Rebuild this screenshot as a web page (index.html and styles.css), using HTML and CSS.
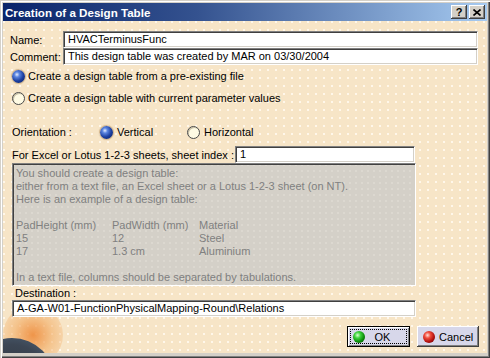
FILE: index.html
```html
<!DOCTYPE html>
<html lang="en">
<head>
  <meta charset="UTF-8" />
  <title>Creation of a Design Table</title>
  <link rel="stylesheet" href="styles.css">
</head>
<body>

  <div class="window">
    <div class="titlebar">
      <span class="title">Creation of a Design Table</span>
      <div class="tb-buttons">
        <button class="tb-btn">?</button>
        <button class="tb-btn">
          <svg width="8" height="7" viewBox="0 0 8 7"><path d="M0.5 0.5 L7.5 6.5 M7.5 0.5 L0.5 6.5" stroke="#000" stroke-width="1.6"/></svg>
        </button>
      </div>
    </div>

    <div class="client">
      <!-- background decoration: sunrise over a planet -->
      <div class="glow"></div>
      <div class="globe"></div>

      <div class="field-row">
        <label>Name:</label>
        <div class="input wide">HVACTerminusFunc</div>
      </div>
      <div class="field-row">
        <label>Comment:</label>
        <div class="input wide">This design table was created by MAR on 03/30/2004</div>
      </div>

      <div class="radio-row"><span class="radio on"></span>Create a design table from a pre-existing file</div>
      <div class="radio-row"><span class="radio off"></span>Create a design table with current parameter values</div>

      <div class="orient-row">
        <span class="orient-label">Orientation :</span>
        <span class="opt first"><span class="radio on"></span>Vertical</span>
        <span class="opt"><span class="radio off"></span>Horizontal</span>
      </div>

      <div class="sheet-row">
        <span class="sheet-label">For Excel or Lotus 1-2-3 sheets, sheet index :</span>
        <div class="input sheet">1</div>
      </div>

      <div class="info-box">
        <div>You should create a design table:</div>
        <div>either from a text file, an Excel sheet or a Lotus 1-2-3 sheet (on NT).</div>
        <div>Here is an example of a design table:</div>
        <div class="blank"></div>
        <div class="cols"><span>PadHeight (mm)</span><span>PadWidth (mm)</span><span>Material</span></div>
        <div class="cols"><span>15</span><span>12</span><span>Steel</span></div>
        <div class="cols"><span>17</span><span>1.3 cm</span><span>Aluminium</span></div>
        <div class="blank"></div>
        <div>In a text file, columns should be separated by tabulations.</div>
      </div>

      <div class="dest-label">Destination :</div>
      <div class="input dest">A-GA-W01-FunctionPhysicalMapping-Round\Relations</div>

      <div class="buttons">
        <button class="btn ok"><span class="focus"><span class="led green"></span><span class="lbl">OK</span></span></button>
        <button class="btn cancel"><span class="led red"></span><span>Cancel</span></button>
      </div>
    </div>
  </div>

</body>
</html>
```

FILE: styles.css
```css
html, body {
  margin: 0;
}
body {
  font-family: "Liberation Sans", Arial, sans-serif;
  font-size: 11px;
  color: #000;
  width: 490px;
  height: 358px;
  overflow: hidden;
}
.window {
  box-sizing: border-box;
  width: 490px;
  height: 358px;
  padding: 3px 3px 5px 3px;
  background: #d4d0c8;
  box-shadow: inset 1px 1px #d4d0c8, inset 2px 2px #fff, inset -1px -1px #404040, inset -2px -2px #808080;
  display: flex;
  flex-direction: column;
}
.titlebar {
  height: 18px;
  flex: none;
  display: flex;
  align-items: center;
  padding-left: 2px;
  background: linear-gradient(to right, #0a246a, #34528f 40%, #a6caf0);
}
.title {
  color: #fff;
  font-weight: bold;
  font-size: 11.6px;
}
.tb-buttons {
  margin-left: auto;
  display: flex;
  gap: 2px;
  padding-right: 2px;
}
.tb-btn {
  width: 16px;
  height: 14px;
  box-sizing: border-box;
  padding: 0;
  border: none;
  background: #d4d0c8;
  box-shadow: inset -1px -1px #404040, inset 1px 1px #fff, inset -2px -2px #808080;
  font-family: "Liberation Sans", Arial, sans-serif;
  font-weight: bold;
  font-size: 11px;
  color: #000;
  display: flex;
  align-items: center;
  justify-content: center;
}
.client {
  flex: 1;
  position: relative;
  z-index: 0;
  overflow: hidden;
  padding: 10px 8px 0 9px;
  background-color: #f7e5c7;
  background-image: radial-gradient(circle at 1px 1px, #fff7ea 0.8px, transparent 1.3px);
  background-size: 8px 8px;
}
.glow {
  position: absolute;
  z-index: -1;
  left: 0;
  top: 284px;
  width: 60px;
  height: 60px;
  border-radius: 50%;
  background: radial-gradient(circle, rgba(238, 140, 60, 0.9) 0, rgba(242, 168, 92, 0.55) 45%, rgba(247, 229, 199, 0) 100%);
}
.globe {
  position: absolute;
  z-index: -1;
  left: -34px;
  top: 317px;
  width: 86px;
  height: 86px;
  border-radius: 50%;
  background: radial-gradient(circle at 50% 50%, #2e343c 0, #3c4654 60%, #4a5c70 84%, #5a8cb4 91%, #8ad0f2 100%);
}
.field-row {
  display: flex;
  align-items: center;
  height: 17px;
}
.field-row label {
  width: 53px;
  margin-left: -2px;
}
.input {
  box-sizing: border-box;
  height: 17px;
  background: #fff;
  border: 1px solid;
  border-color: #808080 #fff #fff #808080;
  box-shadow: inset 1px 1px #404040, inset -1px -1px #d4d0c8;
  padding: 0 3px 0 4px;
  line-height: 15px;
  white-space: nowrap;
  overflow: hidden;
}
.input.wide {
  width: 415px;
}
.radio-row {
  height: 22px;
  display: flex;
  align-items: center;
  gap: 3px;
}
.radio {
  width: 13px;
  height: 13px;
  box-sizing: border-box;
  border-radius: 50%;
  flex: none;
}
.radio.off {
  background: #fffbe4;
  border: 1px solid #4a4a4a;
  box-shadow: inset 1px 1px #c9c0a6;
}
.radio.on {
  background: radial-gradient(circle at 38% 35%, #e4ecff 0, #5a84e0 22%, #1c3fa0 55%, #061a55 100%);
  box-shadow: 0 0 1px 1px rgba(160, 115, 60, 0.45);
}
.orient-row {
  margin-top: 12px;
  height: 22px;
  display: flex;
  align-items: center;
}
.orient-label {
  width: 88px;
}
.opt {
  display: flex;
  align-items: center;
  gap: 4px;
}
.opt.first {
  width: 87px;
}
.sheet-row {
  margin-top: 3px;
  display: flex;
  align-items: center;
  height: 17px;
}
.sheet-label {
  width: 223px;
}
.input.sheet {
  width: 180px;
}
.info-box {
  box-sizing: border-box;
  width: 404px;
  height: 123px;
  border: 1px solid;
  border-color: #808080 #fff #fff #808080;
  box-shadow: inset 1px 1px #404040;
  background-color: #d4d0c8;
  background-image: radial-gradient(circle at 1px 1px, #dcd8d0 0.8px, transparent 1.3px);
  background-size: 6px 6px;
  color: #808080;
  padding: 3px 0 0 3px;
  line-height: 13px;
  white-space: nowrap;
}
.info-box .blank {
  height: 13px;
}
.cols {
  display: grid;
  grid-template-columns: 96px 87px auto;
}
.dest-label {
  height: 14px;
  line-height: 14px;
  padding-left: 3px;
}
.input.dest {
  width: 404px;
}
.buttons {
  margin-top: 9px;
  display: flex;
  justify-content: flex-end;
  gap: 7px;
}
.btn {
  height: 21px;
  box-sizing: border-box;
  border: none;
  background: #d7d7ea;
  font-family: "Liberation Sans", Arial, sans-serif;
  font-size: 11px;
  color: #000;
  display: flex;
  align-items: center;
  padding: 0;
}
.btn.ok {
  width: 63px;
  border: 1px solid #000;
  box-shadow: inset 1px 1px #fff, inset -1px -1px #808080;
  padding: 2px;
}
.focus {
  flex: 1;
  align-self: stretch;
  display: flex;
  align-items: center;
  border: 1px dotted #000;
  padding-left: 2px;
}
.lbl {
  flex: 1;
  text-align: center;
  padding-right: 6px;
}
.btn.cancel {
  width: 62px;
  box-shadow: inset -1px -1px #404040, inset 1px 1px #fff, inset -2px -2px #808080;
  padding-left: 6px;
  gap: 4px;
}
.led {
  width: 12px;
  height: 12px;
  border-radius: 50%;
  flex: none;
}
.led.green {
  background: radial-gradient(circle at 38% 35%, #d8ffd0 0, #3cd23c 28%, #0a8a0a 62%, #034003 100%);
}
.led.red {
  background: radial-gradient(circle at 38% 35%, #ffe0d8 0, #f04a3a 28%, #b01010 62%, #500000 100%);
}
```
